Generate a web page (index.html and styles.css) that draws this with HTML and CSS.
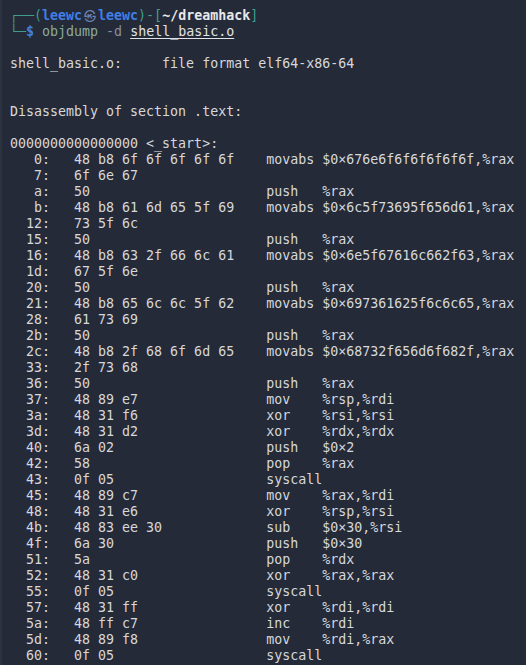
FILE: index.html
```html
<!DOCTYPE html>
<html lang="en">
<head>
<meta charset="utf-8">
<title>objdump</title>
<link rel="stylesheet" href="styles.css">
</head>
<body>
<pre class="term"><span class="g">┌──(</span><span class="u">leewc<span class="at">㉿</span>leewc</span><span class="g">)-[</span><span class="path">~/dreamhack</span><span class="g">]</span>
<span class="g">└─</span><span class="u">$</span> <span class="cmd">objdump</span> <span class="opt">-d</span> <span class="file">shell_basic.o</span>

shell_basic.o:     file format elf64-x86-64


Disassembly of section .text:

0000000000000000 &lt;_start&gt;:
   0:   48 b8 6f 6f 6f 6f 6f    movabs $0×676e6f6f6f6f6f6f,%rax
   7:   6f 6e 67
   a:   50                      push   %rax
   b:   48 b8 61 6d 65 5f 69    movabs $0×6c5f73695f656d61,%rax
  12:   73 5f 6c
  15:   50                      push   %rax
  16:   48 b8 63 2f 66 6c 61    movabs $0×6e5f67616c662f63,%rax
  1d:   67 5f 6e
  20:   50                      push   %rax
  21:   48 b8 65 6c 6c 5f 62    movabs $0×697361625f6c6c65,%rax
  28:   61 73 69
  2b:   50                      push   %rax
  2c:   48 b8 2f 68 6f 6d 65    movabs $0×68732f656d6f682f,%rax
  33:   2f 73 68
  36:   50                      push   %rax
  37:   48 89 e7                mov    %rsp,%rdi
  3a:   48 31 f6                xor    %rsi,%rsi
  3d:   48 31 d2                xor    %rdx,%rdx
  40:   6a 02                   push   $0×2
  42:   58                      pop    %rax
  43:   0f 05                   syscall
  45:   48 89 c7                mov    %rax,%rdi
  48:   48 31 e6                xor    %rsp,%rsi
  4b:   48 83 ee 30             sub    $0×30,%rsi
  4f:   6a 30                   push   $0×30
  51:   5a                      pop    %rdx
  52:   48 31 c0                xor    %rax,%rax
  55:   0f 05                   syscall
  57:   48 31 ff                xor    %rdi,%rdi
  5a:   48 ff c7                inc    %rdi
  5d:   48 89 f8                mov    %rdi,%rax
  60:   0f 05                   syscall</pre>
</body>
</html>
```
FILE: styles.css
```css
html, body {
  margin: 0;
  background: #242a38;
}
body {
  min-height: 665px;
  border-left: 2px solid #2c3240;
  box-sizing: border-box;
}
.term {
  margin: 0;
  padding: 8px 8px 0;
  font-family: "DejaVu Sans Mono", "Liberation Mono", monospace;
  font-size: 13.3px;
  line-height: 16px;
  color: #d6d8dc;
  white-space: pre;
}
.g {
  color: #3f9f8c;
}
.u {
  color: #3f7fe6;
  font-weight: bold;
}
.at {
  display: inline-block;
  width: 16px;
  text-align: center;
  font-weight: normal;
  color: #6d84b8;
  font-family: "Noto Sans CJK JP", "DejaVu Sans", sans-serif;
  font-size: 12px;
  line-height: 16px;
  vertical-align: top;
}
.path {
  color: #e8e8ea;
  font-weight: bold;
}
.cmd {
  color: #8aaa9e;
}
.opt {
  color: #8790a4;
}
.file {
  color: #e0e2e6;
  text-decoration: underline;
  text-underline-offset: 2px;
}
```
